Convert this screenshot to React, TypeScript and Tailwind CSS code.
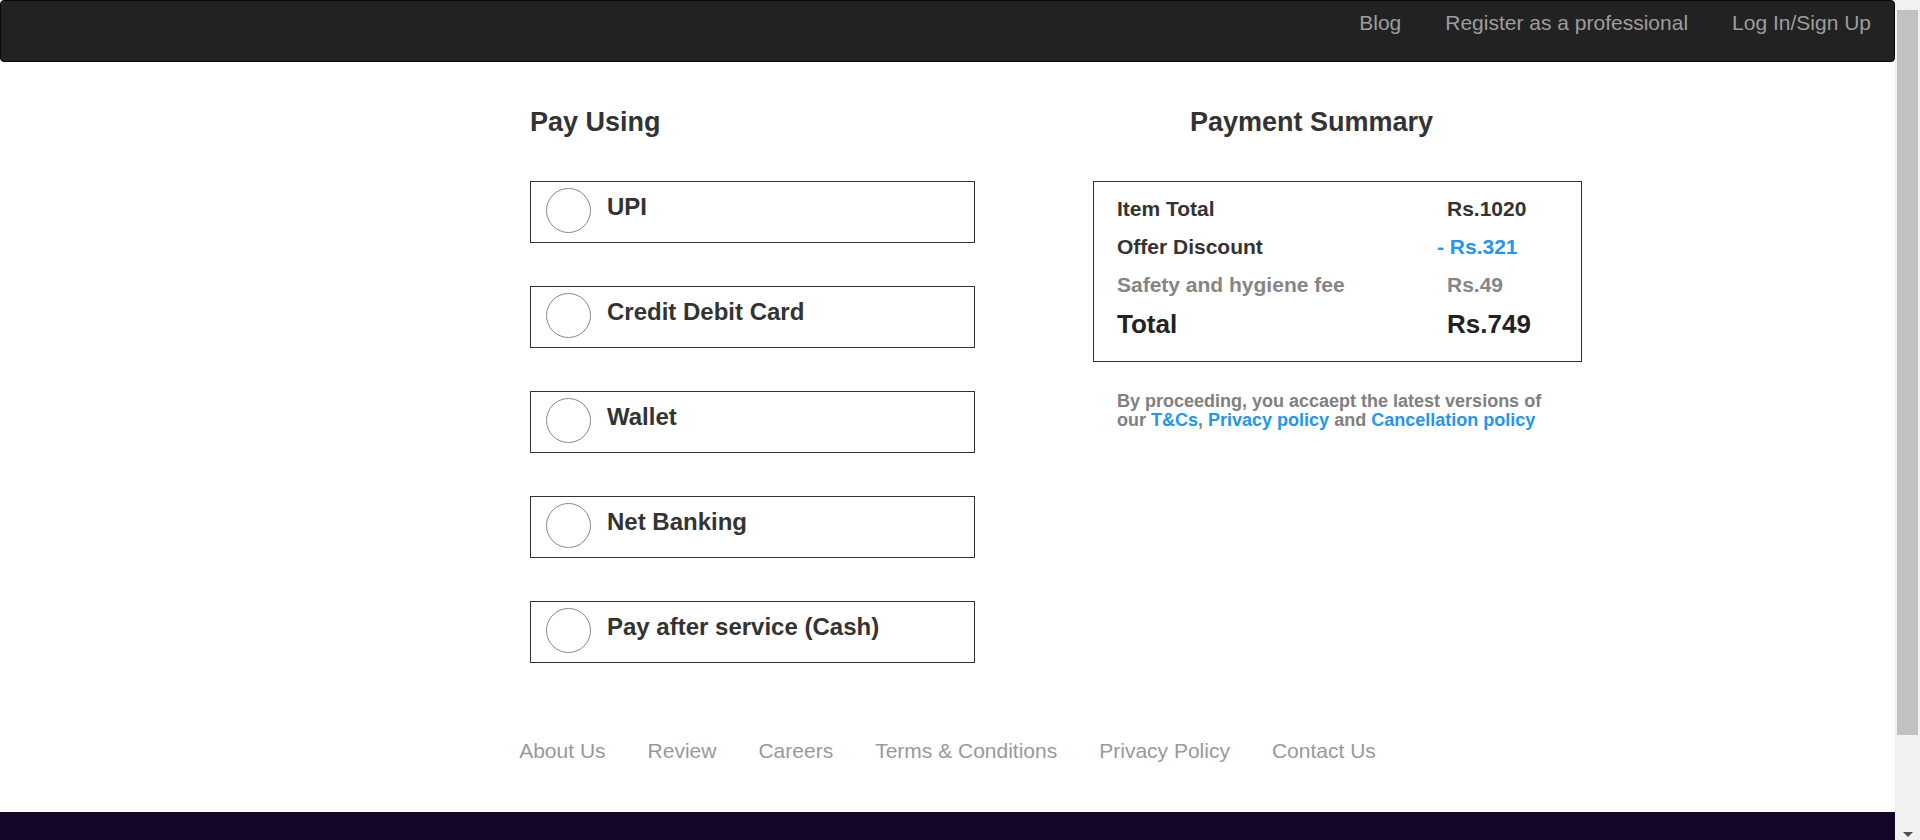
import React from 'react';

const METHODS = ['UPI', 'Credit Debit Card', 'Wallet', 'Net Banking', 'Pay after service (Cash)'];

const FOOTER_LINKS = ['About Us', 'Review', 'Careers', 'Terms & Conditions', 'Privacy Policy', 'Contact Us'];

function Navbar() {
    return (
        <nav className="h-[62px] bg-[#222] border border-[#080808] rounded-[4px] flex justify-end items-start pt-[10px] pr-[1px]">
            {['Blog', 'Register as a professional', 'Log In/Sign Up'].map((item) => (
                <a key={item} href="#" className="px-[22px] text-[21px] leading-[24px] text-[#9d9d9d]">
                    {item}
                </a>
            ))}
        </nav>
    );
}

function PaymentOption({ label }: { label: string }) {
    return (
        <div className="h-[62px] border border-[#333] flex items-start pl-[15px] pt-[6px]">
            <div className="w-[45px] h-[45px] shrink-0 rounded-full border border-[#888]" />
            <span className="ml-[16px] mt-[5px] text-[24px] leading-[27px] font-bold text-[#333]">{label}</span>
        </div>
    );
}

function SummaryRow({ label, value, muted, discount }: { label: string; value: string; muted?: boolean; discount?: boolean }) {
    return (
        <div className={`flex text-[21px] leading-[24px] font-bold ${muted ? 'text-[#858585]' : 'text-[#333]'}`}>
            <span className="w-[320px]">{label}</span>
            <span className={discount ? 'text-[#2196f3]' : 'pl-[10px]'}>{value}</span>
        </div>
    );
}

// browser scrollbar as seen in the screenshot
function Scrollbar() {
    return (
        <div className="w-[25px] shrink-0 bg-[#f1f1f1] flex flex-col items-center">
            <div className="mt-[10px] h-[725px] w-[21px] bg-[#c1c1c1]" />
            <div className="flex-1" />
            <div className="mb-[3px] w-0 h-0 border-l-[5px] border-r-[5px] border-t-[5px] border-l-transparent border-r-transparent border-t-[#505050]" />
        </div>
    );
}

export default function App() {
    return (
        <div className="h-screen overflow-hidden flex bg-white font-['Liberation_Sans',Arial,sans-serif]">
            <div className="flex-1 min-w-0 overflow-hidden">
                <Navbar />

                {/* Main */}
                <div className="flex pl-[530px] pt-[45px]">
                    {/* Pay using */}
                    <div className="w-[445px]">
                        <h2 className="text-[27px] leading-[31px] font-bold text-[#333]">Pay Using</h2>
                        <div className="mt-[43px] flex flex-col gap-[43px]">
                            {METHODS.map((m) => (
                                <PaymentOption key={m} label={m} />
                            ))}
                        </div>
                    </div>

                    {/* Summary */}
                    <div className="ml-[118px] w-[489px]">
                        <h2 className="pl-[97px] text-[27px] leading-[31px] font-bold text-[#333]">Payment Summary</h2>
                        <div className="mt-[43px] h-[181px] border border-[#333] pl-[23px] pt-[15px] flex flex-col">
                            <SummaryRow label="Item Total" value="Rs.1020" />
                            <div className="mt-[14px]">
                                <SummaryRow label="Offer Discount" value="- Rs.321" discount />
                            </div>
                            <div className="mt-[14px]">
                                <SummaryRow label="Safety and hygiene fee" value="Rs.49" muted />
                            </div>
                            <div className="mt-[12px] flex text-[26px] leading-[30px] font-bold text-[#222]">
                                <span className="w-[330px]">Total</span>
                                <span>Rs.749</span>
                            </div>
                        </div>
                        <p className="mt-[30px] px-[24px] text-[18px] leading-[19px] font-bold text-[#808080]">
                            By proceeding, you accaept the latest versions of our{' '}
                            <a href="#" className="text-[#2196f3]">T&amp;Cs</a>,{' '}
                            <a href="#" className="text-[#2196f3]">Privacy policy</a> and{' '}
                            <a href="#" className="text-[#2196f3]">Cancellation policy</a>
                        </p>
                    </div>
                </div>

                {/* Footer links */}
                <div className="mt-[76px] flex justify-center gap-[42px]">
                    {FOOTER_LINKS.map((l) => (
                        <a key={l} href="#" className="text-[21px] leading-[24px] text-[#999]">
                            {l}
                        </a>
                    ))}
                </div>

                <div className="mt-[49px] h-[130px] bg-[#150526]" />
            </div>
            <Scrollbar />
        </div>
    );
}
